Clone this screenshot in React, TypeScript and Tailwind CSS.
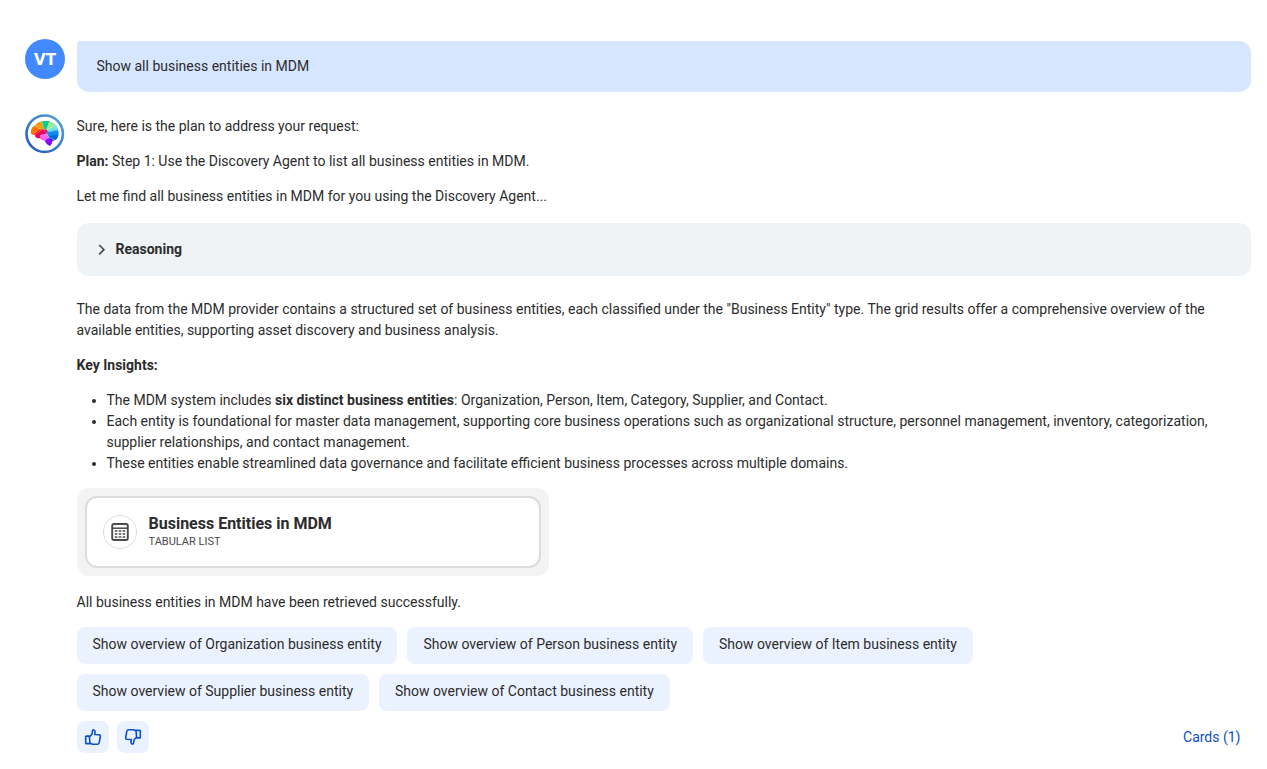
import React from 'react';

const SUGGESTIONS: string[] = ['Organization', 'Person', 'Item', 'Supplier', 'Contact'];

const AssistantLogo: React.FC = () => (
  <svg viewBox="0 0 40 40" className="w-10 h-10 shrink-0">
    <defs>
      <linearGradient id="ring" x1="0" y1="1" x2="1" y2="0">
        <stop offset="0" stopColor="#2458b8" />
        <stop offset="1" stopColor="#4fa3e0" />
      </linearGradient>
      <clipPath id="brain">
        <path d="M6 18.500C6 15 7.500 12.500 10.500 11.500C12 9 15 7.500 18 7.500C21 6.500 25 7 27 9C30 9.500 32 12 32 14C34 16.500 34 20 33 22C32.500 25 30 26.500 27.500 26.500C27 28.500 26.500 31 25 31.700C22.500 31 20.500 29 20 26.500C17.500 26.500 16 25.500 15 24C12 24.500 10 23.500 10 21C7.500 21 6 20 6 18.500Z" />
      </clipPath>
    </defs>
    <circle cx="19.700" cy="19.700" r="18.200" fill="#fff" stroke="url(#ring)" strokeWidth="2.600" />
    <g clipPath="url(#brain)">
      <path d="M4 6H40V34H4Z" fill="#0b8eed" />
      <path d="M4 11L13 11.500L16.500 15.500L11 22H4Z" fill="#ff7600" />
      <path d="M10 12V6H17L19 15L16 16Z" fill="#ff9b00" />
      <path d="M16.500 6H25L22 16H19Z" fill="#00cf8a" />
      <path d="M24.500 6L32 11L23 17L21.500 15.500Z" fill="#91f08c" />
      <path d="M31 10.500L35 15L24 17.500L22.500 16.500Z" fill="#6fe6e2" />
      <path d="M35 20L24 22V28H36Z" fill="#0567d7" />
      <path d="M8 26L10 19.500L16 15L22 15.500V20L15.500 21L14.500 26Z" fill="#fa0055" />
      <path d="M14.500 26L15.500 21L22 19.500L24 23L20 28Z" fill="#ff62ea" />
      <path d="M18 28L22 24.500L29 25.500L27 33H20Z" fill="#8d00ff" />
      <path d="M10 12L16.500 16L19 15.500L17 7M19 15.500H22L25 7M22 15.500L31 11M22.500 18L34 16M16.500 16L10 21M19 15.500L22 20L15.500 21.500M22 20L24 23.500L30 26M24 23.500L20 27" stroke="#fff" strokeWidth="0.300" fill="none" />
    </g>
  </svg>
);

const TableIcon: React.FC = () => (
  <svg viewBox="0 0 18 18" className="w-[18px] h-[18px]" fill="none" stroke="#4a4a4a">
    <rect x="1.200" y="1" width="15.600" height="16" rx="1.800" strokeWidth="1.900" />
    <path d="M1.200 5.200H16.800" strokeWidth="1.500" />
    <path d="M3.800 8H6.400M7.700 8H10.300M11.600 8H14.200M3.800 11H6.400M7.700 11H10.300M11.600 11H14.200M3.800 14H6.400M7.700 14H10.300M11.600 14H14.200" strokeWidth="1.700" />
  </svg>
);

const ThumbIcon: React.FC<{ down?: boolean }> = ({ down }) => (
  <svg
    viewBox="0 0 18 18"
    className={`w-[18px] h-[18px] ${down ? 'rotate-180' : ''}`}
    fill="none"
    stroke="#0b4fd0"
    strokeWidth="1.600"
    strokeLinejoin="round"
  >
    <path d="M2.400 8.100H5.300L6 15.600H2.400C2 15.600 1.700 15.300 1.700 14.900V8.800C1.700 8.400 2 8.100 2.400 8.100Z" />
    <path d="M5.400 9L7.800 6.500L8.600 2.600C8.800 1.600 10.700 1.600 11 3.300C11.200 4.500 10.900 5.500 10.600 6.500L15.100 6.800C16 6.900 16.500 7.500 16.300 8.500L15.200 14.600C15 15.600 14.300 16.200 13.300 16.200H8.500L6 15.200" />
  </svg>
);

export default function App() {
  return (
    <div className="w-[1267px] h-[769px] overflow-hidden bg-white pl-[25px] pr-4 pt-[39px] font-['Roboto',sans-serif] text-sm leading-[21px] text-[#2c2c2c]">
      {/* User message */}
      <div className="flex gap-3">
        <div className="w-10 h-10 shrink-0 rounded-full bg-[#4288ff] flex items-center justify-center pt-0.5 font-['DejaVu_Sans',sans-serif] text-[15px] font-bold text-white">
          VT
        </div>
        <div className="mt-0.5 h-[51px] flex-1 rounded-xl rounded-tl-[3px] bg-[#d7e6ff] px-[19.5px] py-[15px]">
          Show all business entities in MDM
        </div>
      </div>

      {/* Assistant message */}
      <div className="mt-[22px] flex gap-[11.5px]">
        <AssistantLogo />
        <div className="flex-1 min-w-0 pt-0.5">
          <p>Sure, here is the plan to address your request:</p>
          <p className="mt-3.5">
            <strong className="font-bold">Plan:</strong> Step 1: Use the Discovery Agent to list all business entities in MDM.
          </p>
          <p className="mt-3.5">Let me find all business entities in MDM for you using the Discovery Agent...</p>

          <div className="mt-4 h-[53px] rounded-xl bg-[#eff3f6] flex items-center pl-5">
            <svg viewBox="0 0 10 12" className="w-2.5 h-3 mr-[9px]" fill="none" stroke="#4a4a4a" strokeWidth="1.700">
              <path d="M2.200 1L6.900 5.700L2.200 10.400" />
            </svg>
            <span className="font-bold">Reasoning</span>
          </div>

          <p className="mt-[23px]">
            The data from the MDM provider contains a structured set of business entities, each classified under the "Business Entity" type. The grid results offer a comprehensive overview of the available entities, supporting asset discovery and business analysis.
          </p>
          <p className="mt-3.5 font-bold">Key Insights:</p>
          <ul className="mt-3.5 list-disc pl-[30px]">
            <li>
              The MDM system includes <strong className="font-bold">six distinct business entities</strong>: Organization, Person, Item, Category, Supplier, and Contact.
            </li>
            <li>
              Each entity is foundational for master data management, supporting core business operations such as organizational structure, personnel management, inventory, categorization, supplier relationships, and contact management.
            </li>
            <li>
              These entities enable streamlined data governance and facilitate efficient business processes across multiple domains.
            </li>
          </ul>

          <div className="mt-3.5 w-[472px] h-[88px] rounded-xl bg-[#f3f3f3] p-2">
            <div className="h-full rounded-xl border-2 border-[#dcdcdc] bg-white flex items-center pl-4">
              <div className="w-[34px] h-[34px] rounded-full border border-[#dcdcdc] flex items-center justify-center">
                <TableIcon />
              </div>
              <div className="ml-3 pb-0.5">
                <div className="text-base leading-5 font-bold">Business Entities in MDM</div>
                <div className="text-[11px] leading-[15px] text-[#4a4a4a]">TABULAR LIST</div>
              </div>
            </div>
          </div>

          <p className="mt-4">All business entities in MDM have been retrieved successfully.</p>

          <div className="mt-3.5 flex flex-wrap gap-2.5 w-[1000px]">
            {SUGGESTIONS.map((name) => (
              <button key={name} className="h-[37px] rounded-lg bg-[#ebf2ff] pl-4 pr-[15.85px] pb-0.5">
                Show overview of {name} business entity
              </button>
            ))}
          </div>

          <div className="mt-2.5 flex items-center gap-2">
            <button className="w-8 h-8 rounded-lg bg-[#ebf2ff] flex items-center justify-center">
              <ThumbIcon />
            </button>
            <button className="w-8 h-8 rounded-lg bg-[#ebf2ff] flex items-center justify-center">
              <ThumbIcon down />
            </button>
            <button className="ml-auto mr-[10.5px] text-[#0b4fc4]">Cards (1)</button>
          </div>
        </div>
      </div>
    </div>
  );
}
